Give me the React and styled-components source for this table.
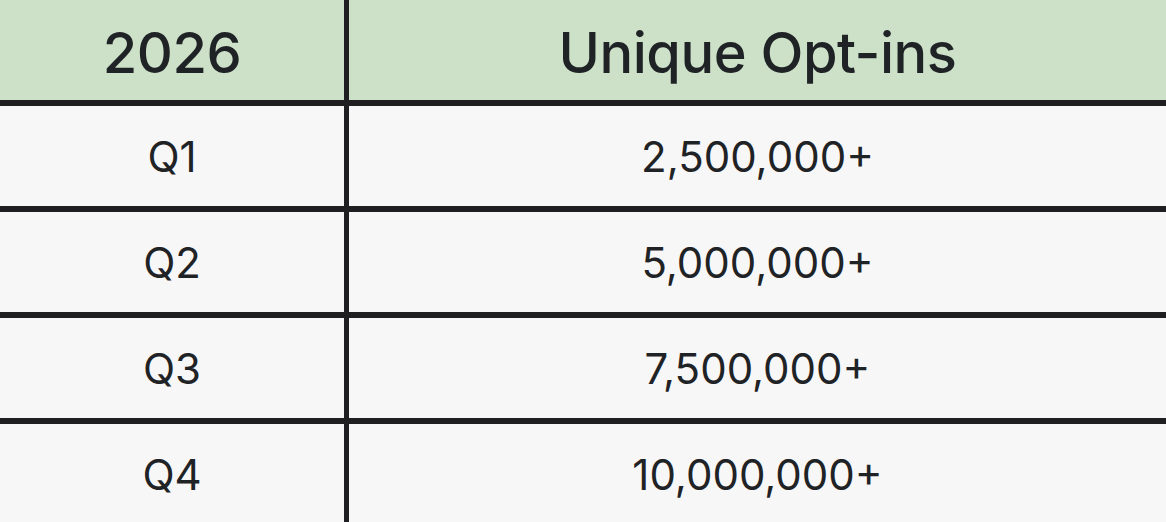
import React from "react";
import styled, { createGlobalStyle } from "styled-components";

const Global = createGlobalStyle`
  html, body { margin: 0; padding: 0; background: #f7f7f7; overflow: hidden; }
  * { box-sizing: border-box; }
`;

const Table = styled.div`
  display: grid;
  grid-template-columns: 344px 1fr;
  grid-auto-rows: 100px;
  column-gap: 5px;
  row-gap: 6px;
  background: #1f1e20;
  width: 1166px;
`;

const Cell = styled.div`
  display: flex;
  align-items: center;
  justify-content: center;
  background: ${(p) => (p.$head ? "#cce1c8" : "#f7f7f7")};
  color: #1f2326;
  font-family: "Inter", sans-serif;
  font-size: ${(p) => (p.$head ? "56px" : "42px")};
  font-weight: ${(p) => (p.$head ? 500 : 400)};
  letter-spacing: ${(p) => (p.$head ? "-0.5px" : "0")};
  padding-top: ${(p) => (p.$head ? "6px" : "0")};
`;

const rows = [
  ["Q1", "2,500,000+"],
  ["Q2", "5,000,000+"],
  ["Q3", "7,500,000+"],
  ["Q4", "10,000,000+"],
];

export default function App() {
  return (
    <>
      <Global />
      <Table>
        <Cell $head>2026</Cell>
        <Cell $head>Unique Opt-ins</Cell>
        {rows.map(([q, v]) => (
          <React.Fragment key={q}>
            <Cell>{q}</Cell>
            <Cell>{v}</Cell>
          </React.Fragment>
        ))}
      </Table>
    </>
  );
}
